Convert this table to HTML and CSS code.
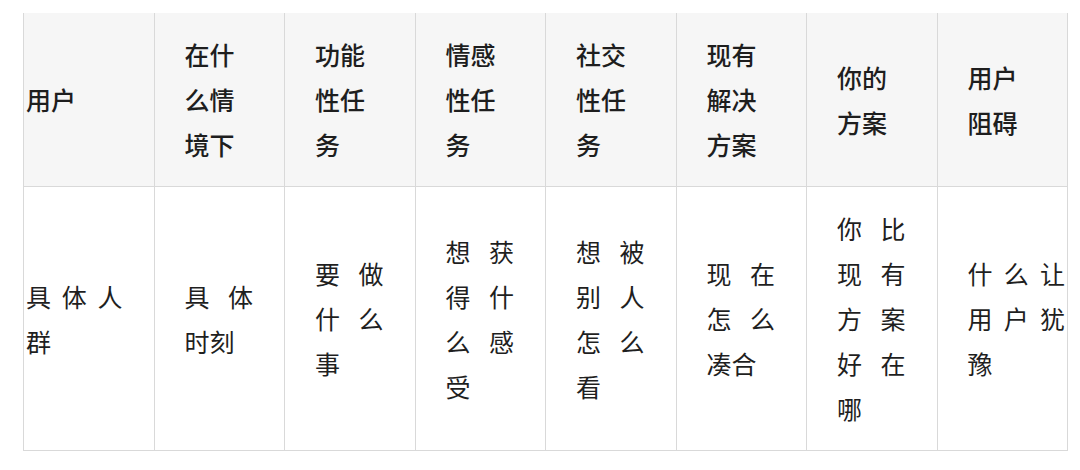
FILE: index.html
```html
<!DOCTYPE html>
<html lang="zh-CN">
<head>
<meta charset="utf-8">
<title>用户任务表</title>
<link rel="stylesheet" href="styles.css">
</head>
<body>
<table class="grid">
  <thead>
    <tr>
      <th class="first">用户</th>
      <th>在什么情境下</th>
      <th>功能性任务</th>
      <th>情感性任务</th>
      <th>社交性任务</th>
      <th>现有解决方案</th>
      <th>你的方案</th>
      <th>用户阻碍</th>
    </tr>
  </thead>
  <tbody>
    <tr>
      <td class="first">具体人群</td>
      <td>具体时刻</td>
      <td>要做什么事</td>
      <td>想获得什么感受</td>
      <td>想被别人怎么看</td>
      <td>现在怎么凑合</td>
      <td>你比现有方案好在哪</td>
      <td class="last">什么让用户犹豫</td>
    </tr>
  </tbody>
</table>
</body>
</html>
```
FILE: styles.css
```css
html, body {
  margin: 0;
  padding: 0;
  background: #ffffff;
}
body {
  font-family: "Noto Sans CJK SC", "Noto Sans", sans-serif;
  color: #222222;
}
.grid {
  margin: 13px 0 0 23px;
  width: 1045px;
  table-layout: fixed;
  border-collapse: collapse;
}
.grid th,
.grid td {
  border: 1px solid #d9d9d9;
  padding: 19px 31px 19px 30px;
  font-size: 25px;
  line-height: 45px;
  vertical-align: middle;
  text-align: left;
}
.grid thead tr {
  background: #f6f6f6;
}
.grid th {
  border-top: none;
  font-weight: 500;
  color: #1e1e1e;
}
.grid td {
  font-weight: 400;
  text-align: justify;
  color: #1f1f1f;
}
.grid .first {
  padding-left: 2px;
}
.grid .last {
  padding-right: 2px;
}
```
